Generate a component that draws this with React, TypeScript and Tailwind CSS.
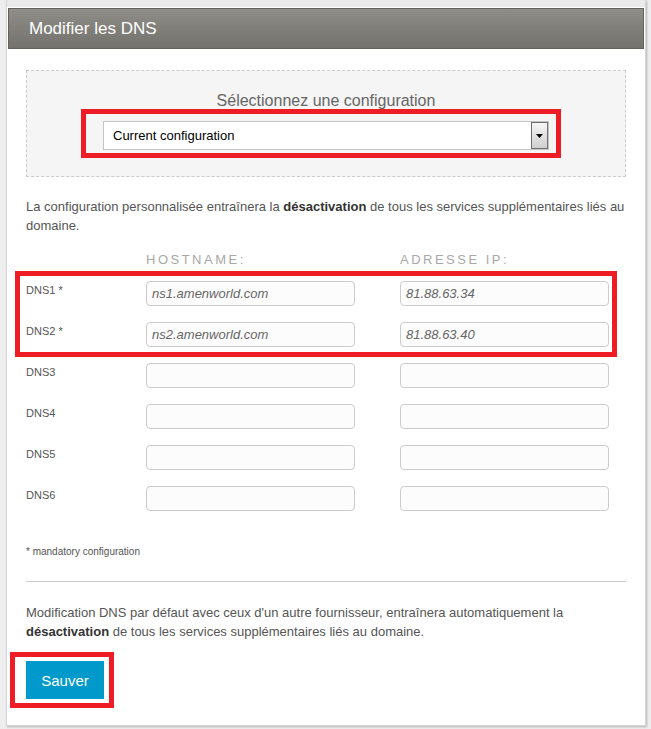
const rows = [
  { label: "DNS1 *", host: "ns1.amenworld.com", ip: "81.88.63.34" },
  { label: "DNS2 *", host: "ns2.amenworld.com", ip: "81.88.63.40" },
  { label: "DNS3", host: "", ip: "" },
  { label: "DNS4", host: "", ip: "" },
  { label: "DNS5", host: "", ip: "" },
  { label: "DNS6", host: "", ip: "" },
];

const DnsRow = ({ label, host, ip }: { label: string; host: string; ip: string }) => (
  <div className="flex items-start">
    <div className="w-[120px] pt-[1px] text-[11px] leading-[16px] text-[#555]">{label}</div>
    <div className="h-[25px] w-[209px] rounded-[4px] border border-[#cccccc] bg-[#fcfcfc] px-[5px] text-[13px] italic leading-[23px] text-[#666]">
      {host}
    </div>
    <div className="ml-[45px] h-[25px] w-[209px] rounded-[4px] border border-[#cccccc] bg-[#fcfcfc] px-[5px] text-[13px] italic leading-[23px] text-[#666]">
      {ip}
    </div>
  </div>
);

export default function App() {
  return (
    <div className="min-h-[729px] bg-[#eeeeee] font-['Liberation_Sans',Arial,sans-serif]">
      <div className="ml-[6px] w-[640px] border-x border-b border-[#d6d6d6] bg-white shadow-[1px_1px_2px_rgba(0,0,0,0.25)]">
        <div className="h-[7px] bg-[#ebebeb]" />
        <div className="mx-[1px] mt-[1px] h-[41px] border border-[#62615c] bg-gradient-to-b from-[#8f8d88] to-[#73726d] pl-[20px] text-[17px] leading-[39px] text-white">
          Modifier les DNS
        </div>

        <div className="px-[19px] pb-[26px] pt-[21px]">
          <div className="border border-dashed border-[#cccccc] bg-[#f5f5f5] pb-[26px] pt-[21px]">
            <div className="text-center text-[16px] leading-[18px] text-[#666]">Sélectionnez une configuration</div>
            <div className="relative mx-auto mt-[11px] flex h-[29px] w-[446px] items-stretch border border-[#c4c4c4] bg-white">
              <div className="flex-1 pl-[9px] text-[13px] leading-[27px] text-black">Current configuration</div>
              <div className="flex w-[17px] items-center justify-center border border-[#6f6f6f] bg-gradient-to-b from-[#f6f6f6] to-[#cfcfcf]">
                <svg width="7" height="4" viewBox="0 0 7 4">
                  <path d="M0 0h7L3.5 4z" fill="#000" />
                </svg>
              </div>
              <div className="pointer-events-none absolute -bottom-[9px] -left-[23px] -right-[13px] -top-[13px] border-[5px] border-[#ee1c25]" />
            </div>
          </div>

          <p className="mt-[20px] text-[13px] leading-[19px] text-[#555]">
            La configuration personnalisée entraînera la <b className="text-[#333]">désactivation</b> de tous les services
            supplémentaires liés au
            <br />
            domaine.
          </p>

          <div className="mt-[17px] flex text-[13px] leading-[16px] tracking-[2.5px] text-[#a8a8a8]">
            <div className="w-[120px]" />
            <div className="w-[209px]">HOSTNAME:</div>
            <div className="ml-[45px] w-[209px]">ADRESSE IP:</div>
          </div>

          <div className="mt-[13px] flex flex-col gap-[16px]">
            <div className="relative flex flex-col gap-[16px]">
              <DnsRow {...rows[0]} />
              <DnsRow {...rows[1]} />
              <div className="pointer-events-none absolute -bottom-[10px] -left-[11px] -top-[10px] right-[9px] border-[5px] border-[#ee1c25]" />
            </div>
            {rows.slice(2).map((row) => (
              <DnsRow key={row.label} {...row} />
            ))}
          </div>

          <div className="mt-[34px] text-[10px] leading-[14px] text-[#555]">* mandatory configuration</div>

          <hr className="mt-[22px] border-t border-[#cccccc]" />

          <p className="mt-[21px] text-[13px] leading-[19px] text-[#555]">
            Modification DNS par défaut avec ceux d'un autre fournisseur, entraînera automatiquement la
            <br />
            <b className="text-[#333]">désactivation</b> de tous les services supplémentaires liés au domaine.
          </p>

          <div className="relative mt-[20px] w-[78px]">
            <button className="h-[38px] w-[78px] bg-[#0099cc] pt-[2px] text-[15px] text-white">Sauver</button>
            <div className="pointer-events-none absolute -bottom-[9px] -left-[16px] -right-[10px] -top-[9px] border-[5px] border-[#ee1c25]" />
          </div>
        </div>
      </div>
    </div>
  );
}
